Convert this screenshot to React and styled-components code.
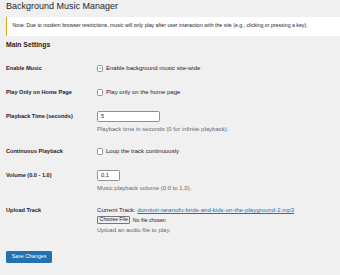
import React from "react";
import styled, { createGlobalStyle } from "styled-components";

const GlobalStyle = createGlobalStyle`
  html, body { margin: 0; padding: 0; }
  body {
    background: #f0f0f1;
    color: #1d2327;
    font-family: "Liberation Sans", Arial, sans-serif;
    width: 340px;
    height: 275px;
    overflow: hidden;
  }
`;

const Wrap = styled.div`
  padding: 1px 0 0 6px;
`;

const Title = styled.h1`
  margin: 0;
  font-size: 9px;
  font-weight: 400;
  line-height: 1.3;
`;

const Notice = styled.div`
  margin-top: 4px;
  height: 19px;
  box-sizing: border-box;
  background: #fff;
  border-left: 1.6px solid #dba617;
  box-shadow: 0 0.4px 0.4px rgba(0, 0, 0, 0.04);
  padding-left: 5.6px;
  display: flex;
  align-items: center;
  font-size: 5.2px;
  line-height: 1.5;
  white-space: nowrap;
  overflow: hidden;
`;

const SectionTitle = styled.h2`
  margin: 4.25px 0 0;
  font-size: 6.8px;
  font-weight: 700;
  line-height: 1.4;
`;

const Form = styled.div`
  margin-top: 7px;
`;

const Row = styled.div`
  display: grid;
  grid-template-columns: 91px 1fr;
  align-items: start;
`;

const Label = styled.div`
  padding: ${(p) => p.$pad || 8.4}px 0;
  font-size: 5.6px;
  font-weight: 700;
  line-height: 1.3;
`;

const Field = styled.div`
  padding: ${(p) => p.$top ?? 6}px 0 6px;
  font-size: 6px;
  line-height: 1.3;
`;

const TrackLine = styled.div`
  font-size: 6.1px;
  line-height: 1.3;
  white-space: nowrap;
`;

const CheckLine = styled.label`
  display: flex;
  align-items: center;
  height: 7.28px;
  padding-top: 8.4px;
  gap: 2.6px;
  font-size: 6px;
  line-height: 1.3;
  white-space: nowrap;
`;

const Box = styled.span`
  width: 6.4px;
  height: 6.4px;
  box-sizing: border-box;
  border: 0.5px solid #8c8f94;
  border-radius: 1.6px;
  background: #fff;
  display: inline-flex;
  align-items: center;
  justify-content: center;
  flex: none;
`;

const TextInput = styled.div`
  width: ${(p) => p.$w}px;
  height: 11.6px;
  box-sizing: border-box;
  border: 0.5px solid #8c8f94;
  border-radius: 1.6px;
  background: #fff;
  padding-left: 3px;
  display: flex;
  align-items: center;
  font-size: 5.6px;
`;

const Description = styled.p`
  margin: 3.4px 0 0;
  color: #646970;
  font-size: 6px;
  line-height: 1.3;
`;

const Link = styled.a`
  color: #2271b1;
  text-decoration: underline;
`;

const FileRow = styled.div`
  margin-top: 2.4px;
  display: flex;
  align-items: center;
  gap: 2.4px;
  font-size: 5.2px;
`;

const FileButton = styled.button`
  height: 7.3px;
  padding: 0 1.6px;
  box-sizing: border-box;
  border: 0.5px solid #767676;
  border-radius: 1px;
  background: #efefef;
  color: #1d2327;
  font-family: inherit;
  font-size: 5.3px;
  line-height: 1;
`;

const Submit = styled.div`
  padding-top: 3.5px;
`;

const PrimaryButton = styled.button`
  height: 12.3px;
  padding: 0 4.7px;
  border: 0.4px solid #2271b1;
  border-radius: 1.2px;
  background: #2271b1;
  color: #fff;
  font-family: inherit;
  font-size: 5.3px;
  line-height: 1;
`;

const Check = () => (
  <svg width="6" height="6" viewBox="0 0 20 20">
    <path d="M14.83 4.89l1.34.94-5.81 8.38H9.02L5.78 9.67l1.34-1.25 2.57 2.4z" fill="#3582c4" />
  </svg>
);

const CheckRow = ({ label, text, checked }) => (
  <Row>
    <Label>{label}</Label>
    <CheckLine>
      <Box>{checked && <Check />}</Box>
      <span>{text}</span>
    </CheckLine>
  </Row>
);

export default function App() {
  return (
    <>
      <GlobalStyle />
      <Wrap>
        <Title>Background Music Manager</Title>
        <Notice>
          Note: Due to modern browser restrictions, music will only play after user interaction with the site (e.g., clicking or pressing a key).
        </Notice>
        <SectionTitle>Main Settings</SectionTitle>
        <Form>
          <CheckRow label="Enable Music" text="Enable background music site-wide" checked />
          <CheckRow label="Play Only on Home Page" text="Play only on the home page" />
          <Row>
            <Label $pad={8}>Playback Time (seconds)</Label>
            <Field $top={6.3}>
              <TextInput $w={63}>5</TextInput>
              <Description>Playback time in seconds (0 for infinite playback).</Description>
            </Field>
          </Row>
          <CheckRow label="Continuous Playback" text="Loop the track continuously" />
          <Row>
            <Label $pad={8.4}>Volume (0.0 - 1.0)</Label>
            <Field $top={6}>
              <TextInput $w={23}>0,1</TextInput>
              <Description>Music playback volume (0.0 to 1.0).</Description>
            </Field>
          </Row>
          <Row>
            <Label $pad={8.4}>Upload Track</Label>
            <Field $top={7.5}>
              <TrackLine>
                Current Track: <Link href="#">domitori-taranofu-birds-and-kids-on-the-playground-2.mp3</Link>
              </TrackLine>
              <FileRow>
                <FileButton>Choose File</FileButton>
                <span>No file chosen</span>
              </FileRow>
              <Description>Upload an audio file to play.</Description>
            </Field>
          </Row>
        </Form>
        <Submit>
          <PrimaryButton>Save Changes</PrimaryButton>
        </Submit>
      </Wrap>
    </>
  );
}
